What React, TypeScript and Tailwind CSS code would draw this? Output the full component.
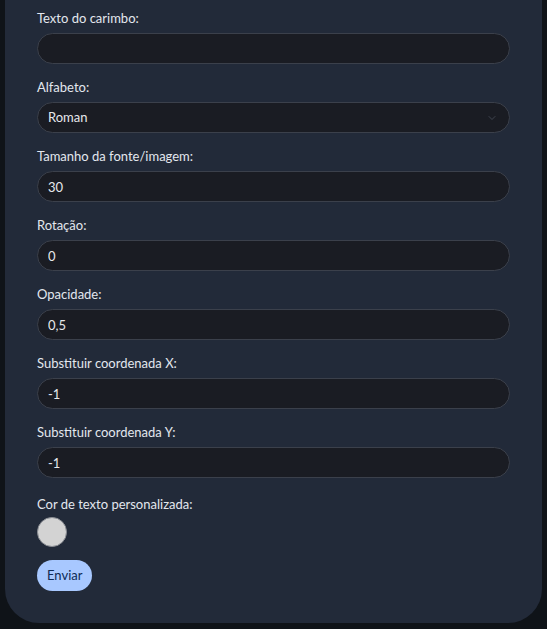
import { ChevronDown } from "lucide-react";

const fields = [
  { label: "Tamanho da fonte/imagem:", value: "30" },
  { label: "Rotação:", value: "0" },
  { label: "Opacidade:", value: "0,5" },
  { label: "Substituir coordenada X:", value: "-1" },
  { label: "Substituir coordenada Y:", value: "-1" },
];

const inputCls =
  "block h-[31px] w-full rounded-full border border-[#3b404b] bg-[#1a1c23] px-[10px] text-[13px] text-[#e6e8ec] outline-none";

export default function App() {
  return (
    <div
      className="min-h-[629px] bg-[#0f1318] px-[5px] pb-[6px]"
      style={{ fontFamily: 'Lato, "Segoe UI", sans-serif' }}
    >
      <div className="rounded-b-[34px] bg-[#222a39] pl-[32px] pr-[32px] pt-[8px] pb-[32px]">
        <div className="flex flex-col gap-[13px]">
          <div>
            <label className="mb-[5px] block text-[13px] leading-[20px] text-[#e3e7ee]">
              Texto do carimbo:
            </label>
            <input type="text" className={inputCls} defaultValue="" />
          </div>

          <div>
            <label className="mb-[5px] block text-[13px] leading-[20px] text-[#e3e7ee]">
              Alfabeto:
            </label>
            <div className="relative">
              <div className={inputCls + " flex items-center"}>Roman</div>
              <ChevronDown
                size={12}
                strokeWidth={1.5}
                className="absolute right-[12px] top-[10px] text-[#4c525d]"
              />
            </div>
          </div>

          {fields.map((f) => (
            <div key={f.label}>
              <label className="mb-[5px] block text-[13px] leading-[20px] text-[#e3e7ee]">
                {f.label}
              </label>
              <input type="text" className={inputCls} defaultValue={f.value} />
            </div>
          ))}
        </div>

        <div className="mt-[16px]">
          <label className="block text-[13px] leading-[20px] text-[#e3e7ee]">
            Cor de texto personalizada:
          </label>
          <div className="mt-[3px] h-[30px] w-[30px] rounded-full border border-[#8a8d93] bg-[#d3d3d3]" />
        </div>

        <button className="mt-[13px] h-[31px] rounded-full bg-[#a8c8ff] px-[10px] text-[13px] text-[#0d2a55]">
          Enviar
        </button>
      </div>
    </div>
  );
}
